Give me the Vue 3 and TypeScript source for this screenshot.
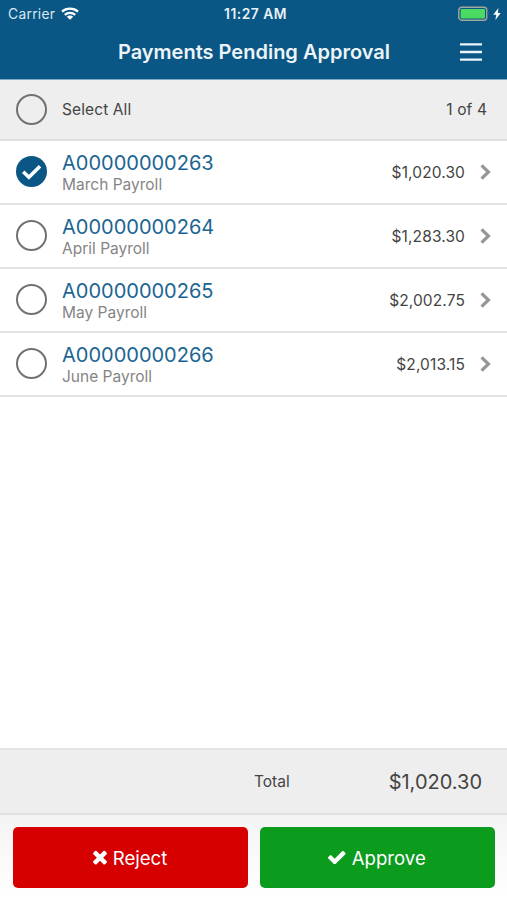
<script setup lang="ts">
import { computed, ref } from 'vue'

interface Payment {
  id: string
  label: string
  amount: number
  selected: boolean
}

const payments = ref<Payment[]>([
  { id: 'A00000000263', label: 'March Payroll', amount: 1020.3, selected: true },
  { id: 'A00000000264', label: 'April Payroll', amount: 1283.3, selected: false },
  { id: 'A00000000265', label: 'May Payroll', amount: 2002.75, selected: false },
  { id: 'A00000000266', label: 'June Payroll', amount: 2013.15, selected: false },
])

const chosen = computed(() => payments.value.filter((p) => p.selected))
const total = computed(() => chosen.value.reduce((sum, p) => sum + p.amount, 0))
const allSelected = computed(() => chosen.value.length === payments.value.length)

function money(value: number): string {
  return '$' + value.toLocaleString('en-US', { minimumFractionDigits: 2, maximumFractionDigits: 2 })
}

function toggleAll(): void {
  const next = !allSelected.value
  payments.value.forEach((p) => (p.selected = next))
}
</script>

<template>
  <div class="screen">
    <header class="top">
      <div class="status">
        <div class="carrier">
          <span class="carrier-name">Carrier</span>
          <svg class="wifi" viewBox="0 0 18 13" width="18" height="13">
            <path d="M1 4.6C5.4.6 12.6.6 17 4.6" />
            <path d="M3.8 7.8c2.9-2.7 7.5-2.7 10.4 0" />
            <path class="solid" d="M9 12.8 5.8 9.8c1.7-1.7 4.7-1.7 6.4 0z" />
          </svg>
        </div>
        <span class="clock">11:27 AM</span>
        <div class="power">
          <svg viewBox="0 0 31 16" width="31" height="16">
            <rect class="shell" x=".8" y="1.2" width="28" height="13" rx="3" />
            <rect class="charge" x="2.6" y="3" width="24.4" height="9.4" rx="1" />
            <path class="tip" d="M30 6v3.4" />
          </svg>
          <svg viewBox="0 0 8 12" width="8" height="12">
            <path class="bolt" d="M5.4 0 .3 6.8h2.9L2.4 12 7.7 5H4.8z" />
          </svg>
        </div>
      </div>
      <div class="bar">
        <h1>Payments Pending Approval</h1>
        <button class="menu" aria-label="Menu">
          <svg viewBox="0 0 22 20" width="22" height="20">
            <path d="M0 2.4h22M0 10h22M0 17.6h22" />
          </svg>
        </button>
      </div>
    </header>

    <section class="row select-all">
      <button class="radio" :class="{ on: allSelected }" aria-label="Select All" @click="toggleAll"></button>
      <span class="caption">Select All</span>
      <span class="count">{{ chosen.length }} of {{ payments.length }}</span>
    </section>

    <main>
      <article v-for="p in payments" :key="p.id" class="row">
        <button class="radio" :class="{ on: p.selected }" :aria-label="p.id" @click="p.selected = !p.selected">
          <svg v-if="p.selected" viewBox="0 0 31 31" width="31" height="31">
            <path d="M7.2 15.8 12.9 21.2 24 10.2" />
          </svg>
        </button>
        <div class="info">
          <span class="id">{{ p.id }}</span>
          <span class="label">{{ p.label }}</span>
        </div>
        <span class="amount">{{ money(p.amount) }}</span>
        <svg class="chevron" viewBox="0 0 11 16" width="11" height="16">
          <path d="M1.6 1.4 8.4 8 1.6 14.6" />
        </svg>
      </article>
    </main>

    <section class="total">
      <span class="total-label">Total</span>
      <span class="total-value">{{ money(total) }}</span>
    </section>

    <footer>
      <button class="action reject">
        <svg viewBox="302 302 1188 1252" width="14" height="14.6">
          <path d="M1490 1322q0 40-28 68l-136 136q-28 28-68 28t-68-28l-294-294-294 294q-28 28-68 28t-68-28l-136-136q-28-28-28-68t28-68l294-294-294-294q-28-28-28-68t28-68l136-136q28-28 68-28t68 28l294 294 294-294q28-28 68-28t68 28l136 136q28 28 28 68t-28 68l-294 294 294 294q28 28 28 68z" />
        </svg>
        <span>Reject</span>
      </button>
      <button class="action approve">
        <svg viewBox="121 334 1550 1188" width="17.5" height="13.4">
          <path d="M1671 566q0 40-28 68l-724 724-136 136q-28 28-68 28t-68-28l-136-136-362-362q-28-28-28-68t28-68l136-136q28-28 68-28t68 28l294 295 656-657q28-28 68-28t68 28l136 136q28 28 28 68z" />
        </svg>
        <span>Approve</span>
      </button>
    </footer>
  </div>
</template>

<style>
body {
  margin: 0;
  background: #fff;
}
</style>

<style scoped>
.screen {
  display: flex;
  flex-direction: column;
  width: 507px;
  height: 900px;
  overflow: hidden;
  background: #fff;
  color: #444;
  font-family: Inter, 'Liberation Sans', sans-serif;
}
button {
  margin: 0;
  padding: 0;
  border: 0;
  background: none;
  font: inherit;
  color: inherit;
}
svg {
  display: block;
  flex: none;
}
.top {
  box-sizing: border-box;
  height: 80px;
  flex: none;
  background: #0a5685;
  border-bottom: 1px solid #7fa9c2;
  color: #fff;
}
.status {
  display: grid;
  grid-template-columns: 1fr auto 1fr;
  align-items: center;
  height: 27px;
  padding: 0 6px 0 8px;
}
.carrier {
  display: flex;
  align-items: center;
  gap: 6px;
}
.carrier-name {
  font-size: 13.8px;
  letter-spacing: 0.3px;
  color: #d9e7f0;
}
.wifi path {
  fill: none;
  stroke: #fff;
  stroke-width: 2.3;
}
.wifi .solid {
  fill: #fff;
  stroke: none;
}
.clock {
  padding-left: 2px;
  font-size: 13.8px;
  font-weight: 600;
  letter-spacing: 0.5px;
  color: #e8f1f6;
}
.power {
  display: flex;
  align-items: center;
  justify-content: flex-end;
  gap: 4px;
}
.shell {
  fill: none;
  stroke: #a0a99b;
  stroke-width: 1.4;
}
.charge {
  fill: #4bdb62;
}
.tip {
  stroke: #2b6e8f;
  stroke-width: 1;
}
.bolt {
  fill: #fff;
}
.bar {
  display: grid;
  grid-template-columns: 1fr auto 1fr;
  align-items: center;
  height: 50px;
  padding: 0 25px;
}
h1 {
  grid-column: 2;
  margin: 0;
  padding-left: 1px;
  font-size: 20px;
  font-weight: 600;
  white-space: nowrap;
  color: #ecf4f8;
}
.menu {
  justify-self: end;
}
.menu path {
  fill: none;
  stroke: #eaf4f9;
  stroke-width: 2.4;
}
.row {
  box-sizing: border-box;
  display: flex;
  align-items: center;
  height: 64px;
  padding: 0 16px;
  border-bottom: 2px solid #e5e5e5;
}
.select-all {
  flex: none;
  height: 61px;
  padding-right: 20px;
  background: #eee;
  border-bottom-color: #e0e0e0;
}
.radio {
  box-sizing: border-box;
  flex: none;
  width: 31px;
  height: 31px;
  margin-right: 15px;
  border: 2.5px solid #717171;
  border-radius: 50%;
}
main .radio {
  margin-bottom: 1px;
}
.radio.on {
  border: 0;
  background: #0a5685;
}
.radio path {
  fill: none;
  stroke: #fff;
  stroke-width: 3.6;
}
.caption,
.count {
  font-size: 15.5px;
  letter-spacing: 0.1px;
}
.amount {
  font-size: 15.5px;
  letter-spacing: 0.12px;
}
.count,
.amount {
  margin-left: auto;
}
.info {
  display: flex;
  flex-direction: column;
}
.id {
  font-size: 20px;
  line-height: 24px;
  color: #1b6592;
}
.label {
  font-size: 15.5px;
  line-height: 19px;
  color: #858585;
}
.chevron {
  margin-left: 15px;
}
.chevron path {
  fill: none;
  stroke: #959595;
  stroke-width: 3.2;
}
main {
  flex: 1;
}
.total {
  box-sizing: border-box;
  display: flex;
  align-items: center;
  flex: none;
  height: 67px;
  padding: 0 25px 0 254px;
  background: #eee;
  border-top: 2px solid #e5e5e5;
  border-bottom: 2px solid #e0e0e0;
}
.total-label {
  font-size: 15.5px;
}
.total-value {
  margin-left: auto;
  font-size: 20px;
}
footer {
  box-sizing: border-box;
  display: grid;
  grid-template-columns: 1fr 1fr;
  gap: 12px;
  flex: none;
  height: 85px;
  padding: 12px 12px 12px 13px;
  background: linear-gradient(#f4f4f4, #fff);
}
.action {
  display: flex;
  align-items: center;
  justify-content: center;
  gap: 6px;
  padding-right: 1px;
  border-radius: 5px;
  color: #fff;
  font-size: 18.6px;
}
.action path {
  fill: #fff;
}
.reject {
  background: #d60000;
}
.approve {
  background: #0b9b1d;
}
</style>
